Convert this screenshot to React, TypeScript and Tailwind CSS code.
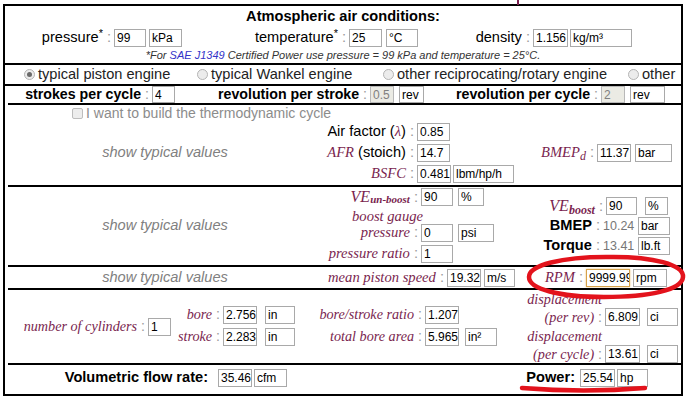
import React from "react";

const SERIF = "font-['Liberation_Serif','Times_New_Roman',serif] italic text-[#7a1f4f]";

function Box({ c, v, h, dis, focus }: { c: string; v: string; h?: string; dis?: boolean; focus?: boolean }) {
  return (
    <input
      readOnly
      value={v}
      className={
        c +
        " " +
        (h ?? "h-[18px]") +
        " shrink-0 border pl-[2px] pr-0 text-[12px] font-normal not-italic leading-none outline-none font-['Liberation_Sans',Arial,sans-serif] " +
        (dis
          ? "border-[#b8b8b8] bg-[#ebebe4] text-[#808080]"
          : focus
          ? "border-[#d6a24a] bg-white text-black shadow-[0_0_2px_#e8c27a]"
          : "border-[#a9a9a9] bg-white text-black")
      }
    />
  );
}

function Colon() {
  return <span className="text-[#9a9a9a] font-normal not-italic"> :</span>;
}

function L({ w, children }: { w: string; children: React.ReactNode }) {
  return <div className={w + " shrink-0 text-right pr-[3px] whitespace-nowrap"}>{children}</div>;
}

function Gap({ w }: { w: string }) {
  return <div className={w + " shrink-0"} />;
}

function Radio({ on }: { on?: boolean }) {
  return (
    <span className="w-[11px] h-[11px] rounded-full border border-[#b4b4b4] bg-[#ececec] flex items-center justify-center shrink-0">
      {on && <span className="w-[5px] h-[5px] rounded-full bg-[#6a6a6a]" />}
    </span>
  );
}

function Typical() {
  return (
    <div className="w-[320px] shrink-0 flex items-center justify-center italic text-[14.6px] text-[#808080]">
      show typical values
    </div>
  );
}

function Divider({ inset }: { inset?: boolean }) {
  return <div className={"h-[2px] shrink-0 bg-black " + (inset ? "ml-[3px]" : "")} />;
}

export default function App() {
  return (
    <div className="relative w-[691px] h-[402px] overflow-hidden bg-white text-black font-['Liberation_Sans',Arial,sans-serif]">
      <div className="absolute left-[517px] top-0 w-[2px] h-[5px] bg-[#7a1f4f]" />
      <div className="ml-[3px] mt-[4px] w-[680px] h-[392px] border-2 border-black flex flex-col">
        {/* Atmospheric */}
        <div className="h-[57px] shrink-0 flex flex-col">
          <div className="h-[22px] flex items-center justify-center font-bold text-[14.6px]">
            Atmospheric air conditions:
          </div>
          <div className="h-[20px] flex items-center text-[14.6px]">
            <L w="w-[109px]">
              pressure<sup>*</sup>
              <Colon />
            </L>
            <Box c="w-[32px]" v="99" />
            <Gap w="w-[3px]" />
            <Box c="w-[33px]" v="kPa" />
            <L w="w-[167px]">
              temperature<sup>*</sup>
              <Colon />
            </L>
            <Box c="w-[33px]" v="25" />
            <Gap w="w-[4px]" />
            <Box c="w-[32px]" v="°C" />
            <L w="w-[115px]">
              density
              <Colon />
            </L>
            <Box c="w-[35px]" v="1.156" />
            <Gap w="w-[2px]" />
            <Box c="w-[62px]" v="kg/m³" />
          </div>
          <div className="h-[14px] flex items-center justify-center italic text-[11px] text-[#333]">
            <span>
              *For <span className="text-[#3434c8]">SAE J1349</span> Certified Power use pressure = 99 kPa and
              temperature = 25°C.
            </span>
          </div>
        </div>
        <Divider />
        {/* engine type */}
        <div className="h-[19px] shrink-0 flex items-center text-[14.6px] text-[#222]">
          <Gap w="w-[19px]" />
          <div className="w-[173px] shrink-0 flex items-center gap-[3px]">
            <Radio on />
            <span>typical piston engine</span>
          </div>
          <div className="w-[186px] shrink-0 flex items-center gap-[3px]">
            <Radio />
            <span>typical Wankel engine</span>
          </div>
          <div className="w-[245px] shrink-0 flex items-center gap-[3px]">
            <Radio />
            <span>other reciprocating/rotary engine</span>
          </div>
          <div className="flex items-center gap-[3px]">
            <Radio />
            <span>other</span>
          </div>
        </div>
        <Divider />
        {/* strokes */}
        <div className="h-[17px] shrink-0 flex items-center font-bold text-[14.2px]">
          <L w="w-[147px]">
            strokes per cycle
            <Colon />
          </L>
          <Box c="w-[23px]" h="h-[17px]" v="4" />
          <L w="w-[195px]">
            revolution per stroke
            <Colon />
          </L>
          <Box c="w-[24px]" h="h-[17px]" v="0.5" dis />
          <Gap w="w-[5px]" />
          <Box c="w-[25px]" h="h-[17px]" v="rev" />
          <L w="w-[177px]">
            revolution per cycle
            <Colon />
          </L>
          <Box c="w-[24px]" h="h-[17px]" v="2" dis />
          <Gap w="w-[5px]" />
          <Box c="w-[35px]" h="h-[17px]" v="rev" />
        </div>
        <Divider inset />
        {/* fuel */}
        <div className="h-[80px] shrink-0 flex flex-col text-[14.6px]">
          <div className="h-[16px] flex items-center pl-[67px] gap-[3px] text-[14px] text-[#8c8c8c]">
            <span className="w-[11px] h-[11px] rounded-[2px] border border-[#bdbdbd] bg-[#ededed] shrink-0" />
            <span>I want to build the thermodynamic cycle</span>
          </div>
          <div className="h-[64px] flex">
            <Typical />
            <div className="w-[192px] shrink-0 flex flex-col pt-[1px] gap-[1px]">
              <div className="h-[20px] flex items-center">
                <L w="w-[92px]">
                  Air factor (<span className={SERIF}>λ</span>)
                  <Colon />
                </L>
                <Box c="w-[33px]" v="0.85" />
              </div>
              <div className="h-[20px] flex items-center">
                <L w="w-[92px]">
                  <span className={SERIF}>AFR</span> (stoich)
                  <Colon />
                </L>
                <Box c="w-[33px]" v="14.7" />
              </div>
              <div className="h-[20px] flex items-center">
                <L w="w-[92px]">
                  <span className={SERIF}>BSFC</span>
                  <Colon />
                </L>
                <Box c="w-[34px]" v="0.481" />
                <Gap w="w-[2px]" />
                <Box c="w-[61px]" v="lbm/hp/h" />
              </div>
            </div>
            <div className="flex-1 flex flex-col pt-[22px]">
              <div className="h-[20px] flex items-center">
                <L w="w-[80px]">
                  <span className={SERIF}>
                    BMEP<sub className="text-[12px]">d</sub>
                  </span>
                  <Colon />
                </L>
                <Box c="w-[34px]" v="11.37" />
                <Gap w="w-[4px]" />
                <Box c="w-[37px]" v="bar" />
              </div>
            </div>
          </div>
        </div>
        <Divider inset />
        {/* boost */}
        <div className="h-[78px] shrink-0 flex text-[14.6px]">
          <Typical />
          <div className="w-[192px] shrink-0 flex flex-col pt-[1px]">
            <div className="h-[18px] flex items-center">
              <L w="w-[96px]">
                <span className={SERIF}>
                  <span className="text-[16px]">VE</span>
                  <sub className="text-[11px] font-bold bottom-[-1px]">un-boost</sub>
                </span>
                <Colon />
              </L>
              <Box c="w-[32px]" v="90" />
              <Gap w="w-[5px]" />
              <Box c="w-[26px]" v="%" />
            </div>
            <div className="h-[18px] flex items-end">
              <div className={"w-[98px] shrink-0 text-right whitespace-nowrap leading-[16px] " + SERIF}>boost gauge</div>
            </div>
            <div className="h-[18px] flex items-center">
              <L w="w-[96px]">
                <span className={SERIF}>pressure</span>
                <Colon />
              </L>
              <Box c="w-[32px]" v="0" />
              <Gap w="w-[5px]" />
              <Box c="w-[36px]" v="psi" />
            </div>
            <Gap w="h-[2px]" />
            <div className="h-[19px] flex items-center">
              <L w="w-[96px]">
                <span className={SERIF}>pressure ratio</span>
                <Colon />
              </L>
              <Box c="w-[32px]" v="1" />
            </div>
          </div>
          <div className="flex-1 flex flex-col pt-[9px]">
            <div className="h-[20px] flex items-center">
              <L w="w-[89px]">
                <span className={SERIF}>
                  <span className="text-[16px]">VE</span>
                  <sub className="text-[12px] font-bold">boost</sub>
                </span>
                <Colon />
              </L>
              <Box c="w-[31px]" v="90" />
              <Gap w="w-[8px]" />
              <Box c="w-[23px]" v="%" />
            </div>
            <div className="h-[20px] flex items-center">
              <L w="w-[86px]">
                <span className="font-bold">BMEP</span>
                <Colon />
              </L>
              <span className="w-[35px] shrink-0 text-[12.5px] text-[#777]">10.24</span>
              <Box c="w-[32px]" v="bar" />
            </div>
            <div className="h-[20px] flex items-center">
              <L w="w-[86px]">
                <span className="font-bold">Torque</span>
                <Colon />
              </L>
              <span className="w-[35px] shrink-0 text-[12.5px] text-[#777]">13.41</span>
              <Box c="w-[32px]" v="lb.ft" />
            </div>
          </div>
        </div>
        <Divider inset />
        {/* speed */}
        <div className="h-[21px] shrink-0 flex items-center text-[14.6px]">
          <Typical />
          <div className="w-[192px] shrink-0 flex items-center">
            <L w="w-[122px]">
              <span className={SERIF}>mean piston speed</span>
              <Colon />
            </L>
            <Box c="w-[34px]" v="19.32" />
            <Gap w="w-[3px]" />
            <Box c="w-[31px]" v="m/s" />
          </div>
          <div className="flex-1 flex items-center">
            <L w="w-[69px]">
              <span className={SERIF}>RPM</span>
              <Colon />
            </L>
            <Box c="w-[44px]" v="9999.999" focus />
            <Gap w="w-[3px]" />
            <Box c="w-[34px]" v="rpm" />
          </div>
        </div>
        <Divider inset />
        {/* geometry */}
        <div className="h-[73px] shrink-0 flex text-[14.2px]">
          <div className="w-[166px] shrink-0 flex items-center">
            <L w="w-[143px]">
              <span className={SERIF}>number of cylinders</span>
              <Colon />
            </L>
            <Box c="w-[23px]" v="1" />
          </div>
          <div className="w-[147px] shrink-0 flex flex-col pt-[16px] gap-[4px]">
            <div className="h-[18px] flex items-center">
              <L w="w-[52px]">
                <span className={SERIF}>bore</span>
                <Colon />
              </L>
              <Box c="w-[34px]" v="2.756" />
              <Gap w="w-[8px]" />
              <Box c="w-[30px]" v="in" />
            </div>
            <div className="h-[18px] flex items-center">
              <L w="w-[52px]">
                <span className={SERIF}>stroke</span>
                <Colon />
              </L>
              <Box c="w-[34px]" v="2.283" />
              <Gap w="w-[8px]" />
              <Box c="w-[30px]" v="in" />
            </div>
          </div>
          <div className="w-[199px] shrink-0 flex flex-col pt-[16px] gap-[4px]">
            <div className="h-[18px] flex items-center">
              <L w="w-[107px]">
                <span className={SERIF}>bore/stroke ratio</span>
                <Colon />
              </L>
              <Box c="w-[34px]" v="1.207" />
            </div>
            <div className="h-[18px] flex items-center">
              <L w="w-[107px]">
                <span className={SERIF}>total bore area</span>
                <Colon />
              </L>
              <Box c="w-[34px]" v="5.965" />
              <Gap w="w-[6px]" />
              <Box c="w-[32px]" v="in²" />
            </div>
          </div>
          <div className="flex-1 flex flex-col">
            <div className="flex items-end">
              <div className="w-[88px] shrink-0 text-right pr-[3px] leading-[18px] whitespace-nowrap">
                <div className={SERIF}>displacement</div>
                <div>
                  <span className={SERIF}>(per rev)</span>
                  <Colon />
                </div>
              </div>
              <Box c="w-[35px]" v="6.809" />
              <Gap w="w-[7px]" />
              <Box c="w-[31px]" v="ci" />
            </div>
            <div className="flex items-end mt-[1px]">
              <div className="w-[88px] shrink-0 text-right pr-[3px] leading-[18px] whitespace-nowrap">
                <div className={SERIF}>displacement</div>
                <div>
                  <span className={SERIF}>(per cycle)</span>
                  <Colon />
                </div>
              </div>
              <Box c="w-[35px]" v="13.61" />
              <Gap w="w-[7px]" />
              <Box c="w-[31px]" v="ci" />
            </div>
          </div>
        </div>
        <Divider inset />
        {/* results */}
        <div className="h-[29px] shrink-0 flex items-center pb-[3px] font-bold text-[14.6px]">
          <div className="w-[213px] shrink-0 text-right pr-[10px] whitespace-nowrap">Volumetric flow rate:</div>
          <Box c="w-[34px]" v="35.46" />
          <Gap w="w-[2px]" />
          <Box c="w-[33px]" v="cfm" />
          <div className="w-[293px] shrink-0 text-right pr-[5px] whitespace-nowrap">Power:</div>
          <Box c="w-[35px]" v="25.54" />
          <Gap w="w-[2px]" />
          <Box c="w-[31px]" v="hp" />
        </div>
      </div>
      {/* annotations */}
      <svg className="absolute left-[524px] top-[253px]" width="164" height="48" viewBox="0 0 164 48">
        <path
          d="M82 4 C 130 3, 160 12, 159 24 C 158 37, 125 44, 80 44 C 35 44, 5 36, 5 24 C 5 12, 38 4, 82 4 Z"
          fill="none"
          stroke="#e3131c"
          strokeWidth="4.5"
        />
      </svg>
      <svg className="absolute left-[518px] top-[383px]" width="132" height="14" viewBox="0 0 132 14">
        <path d="M4 5 Q 66 10 127 5" fill="none" stroke="#e3131c" strokeWidth="4.5" strokeLinecap="round" />
      </svg>
    </div>
  );
}
